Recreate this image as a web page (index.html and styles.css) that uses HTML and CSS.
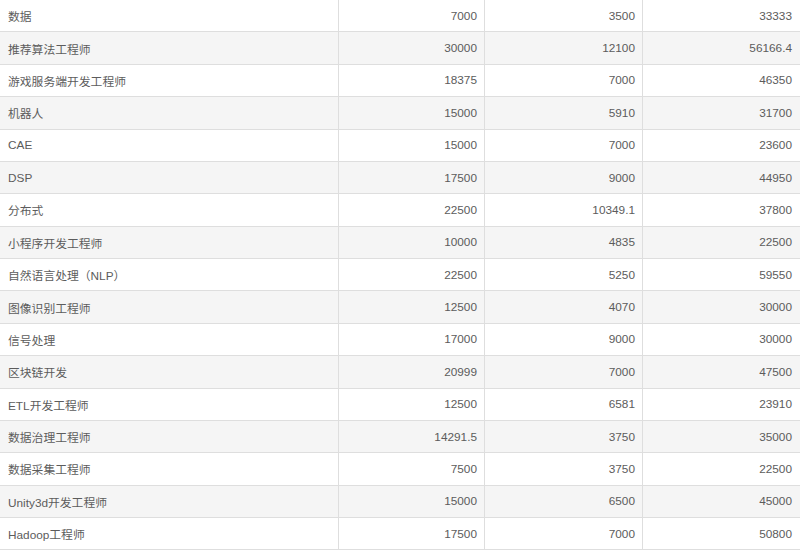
FILE: index.html
```html
<!DOCTYPE html>
<html lang="zh">
<head>
<meta charset="utf-8">
<link rel="stylesheet" href="styles.css">
</head>
<body>
<div class="table">
  <div class="row"><div class="c name">数据</div><div class="c num">7000</div><div class="c num">3500</div><div class="c num last">33333</div></div>
  <div class="row"><div class="c name">推荐算法工程师</div><div class="c num">30000</div><div class="c num">12100</div><div class="c num last">56166.4</div></div>
  <div class="row"><div class="c name">游戏服务端开发工程师</div><div class="c num">18375</div><div class="c num">7000</div><div class="c num last">46350</div></div>
  <div class="row"><div class="c name">机器人</div><div class="c num">15000</div><div class="c num">5910</div><div class="c num last">31700</div></div>
  <div class="row"><div class="c name">CAE</div><div class="c num">15000</div><div class="c num">7000</div><div class="c num last">23600</div></div>
  <div class="row"><div class="c name">DSP</div><div class="c num">17500</div><div class="c num">9000</div><div class="c num last">44950</div></div>
  <div class="row"><div class="c name">分布式</div><div class="c num">22500</div><div class="c num">10349.1</div><div class="c num last">37800</div></div>
  <div class="row"><div class="c name">小程序开发工程师</div><div class="c num">10000</div><div class="c num">4835</div><div class="c num last">22500</div></div>
  <div class="row"><div class="c name">自然语言处理（NLP）</div><div class="c num">22500</div><div class="c num">5250</div><div class="c num last">59550</div></div>
  <div class="row"><div class="c name">图像识别工程师</div><div class="c num">12500</div><div class="c num">4070</div><div class="c num last">30000</div></div>
  <div class="row"><div class="c name">信号处理</div><div class="c num">17000</div><div class="c num">9000</div><div class="c num last">30000</div></div>
  <div class="row"><div class="c name">区块链开发</div><div class="c num">20999</div><div class="c num">7000</div><div class="c num last">47500</div></div>
  <div class="row"><div class="c name">ETL开发工程师</div><div class="c num">12500</div><div class="c num">6581</div><div class="c num last">23910</div></div>
  <div class="row"><div class="c name">数据治理工程师</div><div class="c num">14291.5</div><div class="c num">3750</div><div class="c num last">35000</div></div>
  <div class="row"><div class="c name">数据采集工程师</div><div class="c num">7500</div><div class="c num">3750</div><div class="c num last">22500</div></div>
  <div class="row"><div class="c name">Unity3d开发工程师</div><div class="c num">15000</div><div class="c num">6500</div><div class="c num last">45000</div></div>
  <div class="row"><div class="c name">Hadoop工程师</div><div class="c num">17500</div><div class="c num">7000</div><div class="c num last">50800</div></div>
</div>
</body>
</html>
```
FILE: styles.css
```css
html, body {
  margin: 0;
  padding: 0;
  background: #fff;
}
body {
  font-family: "Liberation Sans", "Noto Sans CJK SC", sans-serif;
  font-size: 11.8px;
  color: #5c5c5c;
  overflow: hidden;
}
.table {
  display: flex;
  flex-direction: column;
  width: 800px;
}
.row {
  display: grid;
  grid-template-columns: 339px 146px 158px 157px;
  height: 32.375px;
  box-sizing: border-box;
  border-bottom: 1px solid #dedede;
  background: #fff;
}
.row:nth-child(even) {
  background: #f5f5f5;
}
.c {
  display: flex;
  align-items: center;
  padding: 0 8px;
  border-right: 1px solid #dedede;
  white-space: nowrap;
}
.c.last {
  border-right: none;
}
.num {
  justify-content: flex-end;
  padding-right: 7px;
}
.c.last {
  padding-right: 8px;
}
```
